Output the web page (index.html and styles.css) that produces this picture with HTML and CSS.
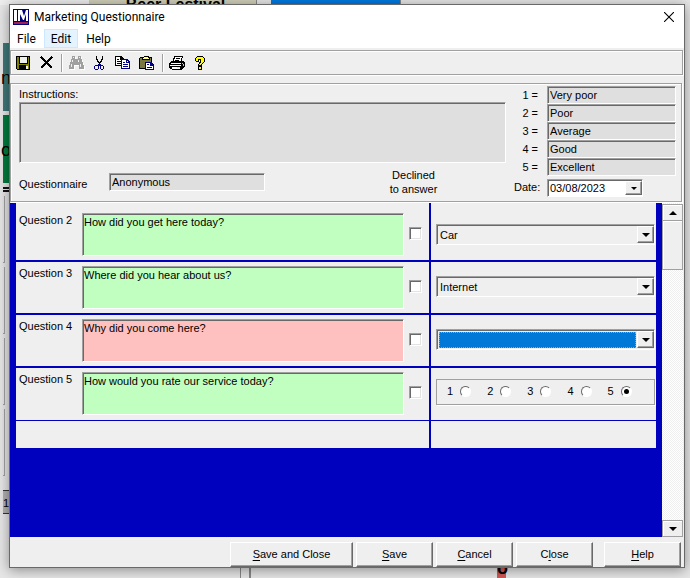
FILE: index.html
```html
<!DOCTYPE html>
<html lang="en">
<head>
<meta charset="utf-8">
<title>Marketing Questionnaire</title>
<link rel="stylesheet" href="styles.css">
</head>
<body>
<div class="backdrop">
  <div class="back-top">
    <span class="back-gap"></span><span class="back-tab">Beer Festival</span><span class="back-tab selected"></span>
  </div>
  <div class="back-left">
    <span class="tile teal">n</span>
    <span class="tile green">o</span>
    <span class="rule"></span>
    <span class="slot"></span><span class="slot"></span><span class="slot"></span><span class="slot"></span>
    <span class="page">1</span>
  </div>
  <div class="back-bottom"><span class="splitter"></span><span class="badge">o</span></div>
</div>

<main class="window">
  <header class="titlebar">
    <svg class="logo" width="16" height="16" viewBox="0 0 16 16"><path fill="#00007b" d="M0 0h16v16H0z"/><path fill="#fff" d="M1 1h3v11H1zM5 1h4l2 6 2-6h2v11h-2V5l-2 6h-1L7 5v7H5z"/><path fill="#a02050" d="M1 13h14v2H1z"/></svg>
    <h1>Marketing Questionnaire</h1>
    <button class="close" aria-label="Close window"><svg width="10" height="10" viewBox="0 0 10 10"><path d="M0 0l10 10M10 0L0 10" stroke="#000" stroke-width="1.1"/></svg></button>
  </header>
  <nav class="menu"><button>File</button><button class="hot">Edit</button><button>Help</button></nav>

  <div class="toolbar">
    <button aria-label="Save"><svg width="16" height="16" viewBox="0 0 16 16" shape-rendering="crispEdges"><path d="M0 1h14v14H1l-1-1z"/><path fill="#808000" d="M1 2h2v7h9V2h1v12H1z"/><path fill="#efefef" d="M4 2h7v6H4zM10 11h2v3h-2z"/><path d="M3 10h7v4H3z"/></svg></button>
    <button aria-label="Delete"><svg width="16" height="16" viewBox="0 0 16 16" shape-rendering="crispEdges"><path d="M2 2l11 11M13 2L2 13" stroke="#000" stroke-width="2"/></svg></button>
    <span class="sep"></span>
    <button aria-label="Find"><svg width="17" height="16" viewBox="0 0 17 16" shape-rendering="crispEdges"><path fill="#fff" transform="translate(1 1)" d="M4 1h3v3h3V1h3v3h1v3h1v3h1v4h-5v-4H6v4H1v-4h1V7h1V4h1z"/><path fill="#a0a0a0" d="M4 1h3v3h3V1h3v3h1v3h1v3h1v4h-5v-4H6v4H1v-4h1V7h1V4h1z"/><path fill="#efefef" d="M5 2h1v1H5zM11 2h1v1h-1zM4 5h1v2H4zM10 5h1v2h-1zM3 9h1v3H3zM12 9h1v3h-1z"/></svg></button>
    <button aria-label="Cut"><svg width="16" height="16" viewBox="0 0 16 16" shape-rendering="crispEdges"><path d="M4 1h1v3h1v2h1v1h1V6h1V4h1V1h1v4h-1v2H9v1H8v2H7V8H6V7H5V5H4z"/><path fill="#000080" fill-rule="evenodd" d="M6 9h3v1h2v1h1v3h-1v1H9v-1H8v-3H7v3H6v1H3v-1H2v-3h1v-1h3zM3 11v3h3v-3zM9 11v3h2v-3z"/></svg></button>
    <button aria-label="Copy"><svg width="17" height="16" viewBox="0 0 17 16" shape-rendering="crispEdges"><path d="M0 1h6l3 3v7H0z"/><path fill="#fff" d="M1 2h4v3h3v5H1z"/><path d="M2 4h2v1H2zM2 6h4v1H2zM2 8h4v1H2z"/><path fill="#000080" d="M6 4h6l3 3v7H6z"/><path fill="#fff" d="M7 5h4v3h3v5H7zM12 6h1v1h-1z"/><path fill="#000080" d="M8 7h2v1H8zM8 9h5v1H8zM8 11h5v1H8z"/></svg></button>
    <button aria-label="Paste"><svg width="17" height="16" viewBox="0 0 17 16" shape-rendering="crispEdges"><path d="M1 2h3l1-1h4l1 1h3v12H0V3z"/><path fill="#787840" d="M1 3h11v10H1z"/><path d="M3 3h8v2H3z"/><path fill="#ffff80" d="M5 2h4v1h1v1H4V3h1z"/><path fill="#000080" d="M6 7h6l3 3v5H6z"/><path fill="#fff" d="M7 8h4v3h3v3H7z"/><path fill="#000080" d="M8 9h2v1H8zM8 12h5v1H8z"/></svg></button>
    <span class="sep"></span>
    <button aria-label="Print"><svg width="17" height="16" viewBox="0 0 17 16" shape-rendering="crispEdges"><path d="M5 1h9v2h-1v3h2v1h1v5h-1v1h-1v1h-1v1H3v-1H1v-1H0V8h1V7h1V6h2V3h1z"/><path fill="#fff" d="M6 2h7v1h-1v3H5V4h1zM2 8h10v1H2zM1 10h11v1H1zM3 12h8v2H3z"/><path d="M7 3h4v1H7zM6 5h4v1H6z"/><path fill="#c0c0c0" d="M13 8h1v1h-1zM14 9h1v2h-1z"/><path fill="#ffff00" d="M8 12h3v1H8z"/></svg></button>
    <button aria-label="Help topics"><svg width="16" height="16" viewBox="0 0 16 16" shape-rendering="crispEdges"><path d="M4 1h6v1h1v1h1v4h-1v1h-1v1H9v2H5V9h1V7h1V5H6v2H3V6H2V3h1V2h1zM5 11h4v4H5z"/><path fill="#ffff00" d="M4 2h6v1h1v4h-1v1H9v1H8v1H6V9h1V8h1V4H5v2H3V3h1zM6 12h2v2H6z"/></svg></button>
  </div>

  <section class="details">
    <div class="info">
      <label for="instructions">Instructions:</label>
      <textarea id="instructions" class="field" readonly></textarea>
      <div class="subject">
        <label for="questionnaire">Questionnaire</label>
        <input id="questionnaire" class="field" value="Anonymous" readonly>
        <p class="declined">Declined<br>to answer</p>
      </div>
    </div>
    <div class="scale">
      <label for="s1">1 =</label><input id="s1" class="field" value="Very poor" readonly>
      <label for="s2">2 =</label><input id="s2" class="field" value="Poor" readonly>
      <label for="s3">3 =</label><input id="s3" class="field" value="Average" readonly>
      <label for="s4">4 =</label><input id="s4" class="field" value="Good" readonly>
      <label for="s5">5 =</label><input id="s5" class="field" value="Excellent" readonly>
      <label for="date">Date:</label>
      <div class="combo date"><select id="date" class="field"><option>03/08/2023</option></select><span class="arrow"></span></div>
    </div>
  </section>

  <section class="body">
    <div class="questions">
      <div class="row">
        <div class="ask"><label for="q2">Question 2</label><textarea id="q2" class="field done" readonly>How did you get here today?</textarea><input type="checkbox" aria-label="Declined to answer question 2"></div>
        <div class="answer"><div class="combo"><select class="field" aria-label="Answer 2"><option>Car</option></select><span class="arrow"></span></div></div>
      </div>
      <div class="row">
        <div class="ask"><label for="q3">Question 3</label><textarea id="q3" class="field done" readonly>Where did you hear about us?</textarea><input type="checkbox" aria-label="Declined to answer question 3"></div>
        <div class="answer"><div class="combo"><select class="field" aria-label="Answer 3"><option>Internet</option></select><span class="arrow"></span></div></div>
      </div>
      <div class="row">
        <div class="ask"><label for="q4">Question 4</label><textarea id="q4" class="field todo" readonly>Why did you come here?</textarea><input type="checkbox" aria-label="Declined to answer question 4"></div>
        <div class="answer"><div class="combo active"><select class="field" aria-label="Answer 4"><option></option></select><span class="arrow"></span></div></div>
      </div>
      <div class="row">
        <div class="ask"><label for="q5">Question 5</label><textarea id="q5" class="field done" readonly>How would you rate our service today?</textarea><input type="checkbox" aria-label="Declined to answer question 5"></div>
        <div class="answer choices"><fieldset class="rating">
          <label>1<input type="radio" name="rate"></label>
          <label>2<input type="radio" name="rate"></label>
          <label>3<input type="radio" name="rate"></label>
          <label>4<input type="radio" name="rate"></label>
          <label>5<input type="radio" name="rate" checked></label>
        </fieldset></div>
      </div>
      <div class="row blank"><div class="ask"></div><div class="answer"></div></div>
    </div>
    <div class="scrollbar">
      <button class="up" aria-label="Scroll up"></button>
      <span class="thumb"></span>
      <button class="down" aria-label="Scroll down"></button>
    </div>
  </section>

  <footer class="actions">
    <button class="wide"><u>S</u>ave and Close</button>
    <button><u>S</u>ave</button>
    <button><u>C</u>ancel</button>
    <button>C<u>l</u>ose</button>
    <button class="help"><u>H</u>elp</button>
  </footer>
</main>
</body>
</html>
```

FILE: styles.css
```css
* { box-sizing: border-box; }

:root {
  --face: #efefef;
  --field: #dfdfdf;
  --shade: #a0a0a0;
  --dark: #696969;
  --blue: #0000bf;
}

body {
  margin: 0;
  min-height: 100vh;
  padding: 4px 5px 10px 9px;
  display: flex;
  background: #e6e6e6;
  color: #000;
  font: 11px/14px "Liberation Sans", Arial, sans-serif;
}

button, input, select, textarea { font: inherit; color: inherit; margin: 0; }
button { padding: 0; border: 0; background: none; }

/* Application behind the dialog */
.backdrop { position: absolute; inset: 0; overflow: hidden; }
.back-top { display: flex; height: 5px; overflow: hidden; }
.back-gap { width: 89px; background: #eee; }
.back-tab {
  width: 168px;
  margin-right: 14px;
  padding-left: 6px;
  background: #cfcfba;
  border-right: 1px solid #888;
  font: bold 16px/10px "Liberation Sans", Arial, sans-serif;
  text-align: center;
}
.back-tab.selected { width: 130px; background: #0078e0; }
.back-left {
  display: flex;
  flex-direction: column;
  gap: 4px;
  width: 9px;
  margin-top: 38px;
  padding-left: 3px;
  overflow: hidden;
}
.tile { height: 68px; font: 18px/70px "Liberation Sans", Arial, sans-serif; text-indent: -2px; }
.teal { background: #3f7878; }
.green { background: #007b3e; }
.rule { height: 5px; border: solid #111; border-width: 2px 0; }
.slot { height: 67px; border: 1px solid var(--shade); border-width: 0 1px 1px 0; margin-right: 4px; }
.page { height: 24px; margin-top: 10px; background: #b0b0b0; border: solid #333; border-width: 1px 0; line-height: 24px; }
.back-bottom {
  position: absolute;
  inset: auto 0 0 0;
  height: 11px;
  display: flex;
  justify-content: space-between;
  padding: 0 184px 0 240px;
  overflow: hidden;
}
.splitter { width: 11px; border: solid #888; border-width: 0 2px 0 1px; }
.badge { width: 9px; background: #cf5858; font: bold 18px/2px "Liberation Sans", Arial, sans-serif; }

/* Dialog frame */
.window {
  position: relative;
  flex: 1;
  min-width: 0;
  display: flex;
  flex-direction: column;
  background: var(--face);
  border: 1px solid var(--dark);
  box-shadow: 0 2px 12px rgba(0, 0, 0, .4);
}
.titlebar {
  display: flex;
  align-items: center;
  gap: 5px;
  height: 24px;
  padding: 0 10px 0 3px;
  background: #fff;
}
h1 { margin: 0; flex: 1; font: 12px/16px Roboto, "Open Sans", sans-serif; }
.close { display: flex; }
.menu { display: flex; height: 19px; background: #fff; }
.menu button { padding: 0 6px; border: 1px solid transparent; font: 12px/16px Roboto, "Open Sans", sans-serif; }
.menu .hot { margin: 0 1px; background: #e5f3ff; border-color: #cce8ff; }

.toolbar {
  display: flex;
  align-items: center;
  gap: 7px;
  height: 25px;
  margin: 2px 1px 0 0;
  padding-left: 5px;
  border: 1px solid var(--shade);
  box-shadow: inset 1px 1px #fff, 1px 1px #fff;
}
.toolbar button { display: flex; }
.toolbar button svg { flex: none; }
.sep { width: 1px; height: 18px; margin: 0 -1px; background: var(--shade); box-shadow: 1px 0 #fff; }

/* Sunken boxes */
.field {
  display: block;
  width: 100%;
  height: 18px;
  padding: 0 2px 1px;
  border: 1px solid;
  border-color: var(--shade) #fff #fff var(--shade);
  border-radius: 0;
  background: var(--field);
  box-shadow: inset 1px 1px var(--dark);
  outline: 0;
  resize: none;
}

.details {
  display: grid;
  grid-template-columns: 1fr 162px;
  gap: 8px;
  margin: 8px 2px 1px 0;
  padding: 2px 5px 4px 8px;
  border: 1px solid var(--shade);
  box-shadow: inset 1px 1px #fff, 1px 1px #fff;
}
.info { display: flex; flex-direction: column; padding-top: 1px; }
.info textarea { height: 61px; margin-top: 1px; }
.subject { display: flex; align-items: center; margin-top: 5px; }
.subject label { width: 90px; padding-top: 4px; }
.subject .field { width: 156px; }
.declined { flex: 1; margin: 0 0 0 56px; text-align: center; }
.scale {
  display: grid;
  grid-template-columns: 24px 1fr;
  column-gap: 9px;
  align-content: start;
  align-items: center;
}
.scale label { text-align: right; white-space: nowrap; }
.scale .combo { margin-top: 3px; }

.combo { position: relative; height: 21px; }
.combo select { appearance: none; height: 100%; padding: 0 20px 0 3px; background: var(--face); }
.combo .arrow {
  position: absolute;
  inset: 2px 1px 2px auto;
  width: 17px;
  display: grid;
  place-items: center;
  background: var(--face);
  border: 1px solid;
  border-color: #fff var(--dark) var(--dark) #fff;
  box-shadow: inset -1px -1px var(--shade);
  pointer-events: none;
}
.arrow::before, .down::before {
  content: "";
  border: 4px solid transparent;
  border-top-color: #000;
  border-bottom: 0;
}
.combo.date { width: 96px; height: 18px; }
.date select { background: #fff; padding-left: 2px; }
.date .arrow::before { border-width: 3px 3px 0; }
.combo.active select { background: #0078d7 content-box; padding: 1px 18px 1px 1px; }
.combo.active::after {
  content: "";
  position: absolute;
  inset: 3px 19px 2px 3px;
  border: 1px dotted #ff8728;
  outline: 1px solid var(--face);
  pointer-events: none;
}

/* Question list */
.body { flex: 1; display: flex; }
.questions { flex: 1; min-width: 0; padding: 0 6px; background: var(--blue); }
.row {
  display: grid;
  grid-template-columns: 413fr 225fr;
  column-gap: 2px;
  margin-bottom: 2px;
}
.row > div { background: var(--face); min-height: 51px; }
.row:nth-child(4) { margin-bottom: 1px; }
.row:nth-child(4) > div { min-height: 52px; }
.row.blank > div { min-height: 27px; }
.ask {
  display: grid;
  grid-template-columns: 63px 1fr 18px;
  align-items: start;
  padding: 4px 7px 4px 3px;
}
.row:first-child .ask { padding-top: 10px; }
.ask:empty { padding: 0; }
.ask textarea { height: 43px; padding: 1px 1px 0; line-height: 15px; }
.ask input { margin: 14px 0 0 5px; }
.done { background: #c0ffc0; }
.todo { background: #ffc0c0; }
input[type="checkbox"] {
  appearance: none;
  width: 13px;
  height: 13px;
  background: #fff;
  border: 1px solid;
  border-color: var(--shade) #fff #fff var(--shade);
  box-shadow: inset 1px 1px var(--dark), inset -1px -1px #e3e3e3;
}
.answer { display: flex; align-items: flex-start; padding: 14px 1px 0 5px; }
.row:first-child .answer { padding-top: 21px; }
.answer.choices { padding-top: 11px; }
.answer .combo, .rating { flex: 1; min-width: 0; }
.rating {
  display: flex;
  align-items: center;
  gap: 17px;
  height: 26px;
  margin: 0;
  padding: 0 10px 2px;
  border: 1px solid var(--shade);
  box-shadow: 1px 1px #fff;
}
.rating label { display: flex; align-items: center; gap: 7px; }
input[type="radio"] {
  appearance: none;
  display: grid;
  place-items: center;
  width: 11px;
  height: 11px;
  margin: 0 -1px 0 0;
  border: 1px solid;
  border-color: var(--dark) #fff #fff var(--dark);
  border-radius: 50%;
  background: #fff;
}
input[type="radio"]:checked::before { content: ""; width: 5px; height: 5px; border-radius: 50%; background: #000; }

.scrollbar {
  display: flex;
  flex-direction: column;
  width: 21px;
  margin-right: 1px;
  padding-top: 1px;
  background: repeating-conic-gradient(#efefef 0 25%, #fff 0 50%) 0 0 / 2px 2px;
}
.scrollbar button, .thumb {
  display: grid;
  place-items: center;
  height: 17px;
  background: var(--face);
  border: 1px solid var(--shade);
  box-shadow: inset 1px 1px #fff;
}
.scrollbar .thumb { height: 50px; margin-top: -1px; }
.up::before {
  content: "";
  border: 4px solid transparent;
  border-bottom-color: #000;
  border-top: 0;
}
.scrollbar .down { margin-top: auto; }

.actions { display: flex; justify-content: flex-end; gap: 3px; padding: 5px 3px 0; }
.actions button {
  width: 77px;
  height: 25px;
  padding-bottom: 2px;
  border: 1px solid;
  border-color: #fff var(--dark) var(--dark) #fff;
  box-shadow: inset -1px -1px var(--shade);
}
.actions .wide { width: 123px; }
.actions .help { margin-left: 8px; }
.actions u { text-underline-offset: 2px; }
```
